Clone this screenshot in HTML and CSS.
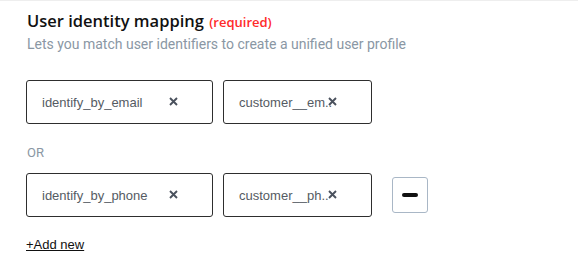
FILE: index.html
```html
<!DOCTYPE html>
<html>
<head>
<meta charset="utf-8">
<link rel="stylesheet" href="styles.css">
</head>
<body>
<div class="panel">
  <h2 class="title">User identity mapping <span class="req">(required)</span></h2>
  <p class="sub">Lets you match user identifiers to create a unified user profile</p>
  <div class="row first">
    <div class="field wide"><span class="val">identify_by_email</span><svg class="x" viewBox="0 0 9 9"><path d="M1 1L8 8M8 1L1 8"/></svg></div>
    <div class="field narrow"><span class="val">customer__em..</span><svg class="x" viewBox="0 0 9 9"><path d="M1 1L8 8M8 1L1 8"/></svg></div>
  </div>
  <div class="or">OR</div>
  <div class="row">
    <div class="field wide"><span class="val">identify_by_phone</span><svg class="x" viewBox="0 0 9 9"><path d="M1 1L8 8M8 1L1 8"/></svg></div>
    <div class="field narrow"><span class="val">customer__ph..</span><svg class="x" viewBox="0 0 9 9"><path d="M1 1L8 8M8 1L1 8"/></svg></div>
    <button class="minus"><span class="bar"></span></button>
  </div>
  <a class="add" href="#">+Add new</a>
</div>
</body>
</html>
```
FILE: styles.css
```css
html, body { margin: 0; padding: 0; background: #fff; }
body { border-top: 1px solid #eeeeee; }
.panel { padding: 8px 0 0 27px; }
.title {
  margin: 0;
  font-family: "Open Sans", sans-serif;
  font-weight: 600;
  font-size: 16.5px;
  line-height: 24px;
  color: #111;
}
.req { color: #ff2a2a; font-size: 13px; font-weight: 600; margin-left: 1px; }
.sub {
  margin: 0;
  font-family: Roboto, sans-serif;
  font-size: 14px;
  line-height: 20px;
  color: #8a97a4;
}
.row { display: flex; align-items: center; margin-left: -1px; }
.row.first { margin-top: 26px; }
.field {
  box-sizing: border-box;
  height: 44px;
  border: 1px solid #2e2e2e;
  border-radius: 3px;
  display: flex;
  align-items: center;
  padding: 0 34px 0 15px;
  font-family: "Liberation Sans", Arial, sans-serif;
  font-size: 13px;
  color: #555b63;
}
.wide { width: 187px; }
.narrow { width: 149px; margin-left: 10px; }
.val { flex: 1; min-width: 0; white-space: nowrap; }
.x { width: 9px; height: 9px; flex: none; margin-top: -2px; stroke: #4a515d; stroke-width: 1.9; fill: none; }
.or {
  margin: 21px 0 12px;
  font-family: Roboto, sans-serif;
  font-size: 13px;
  line-height: 16px;
  color: #8a97a4;
}
.minus {
  margin-left: 20px;
  width: 36px; height: 36px;
  box-sizing: border-box;
  border: 1px solid #a9b7c6;
  border-radius: 3px;
  background: #fff;
  display: flex; align-items: center; justify-content: center;
  padding: 0;
}
.bar { width: 16px; height: 4px; border-radius: 2px; background: #111; }
.add {
  display: inline-block;
  margin-top: 20px;
  margin-left: -1px;
  font-family: "Liberation Sans", Arial, sans-serif;
  font-size: 13px;
  line-height: 16px;
  color: #111;
  text-decoration: underline;
}
```
